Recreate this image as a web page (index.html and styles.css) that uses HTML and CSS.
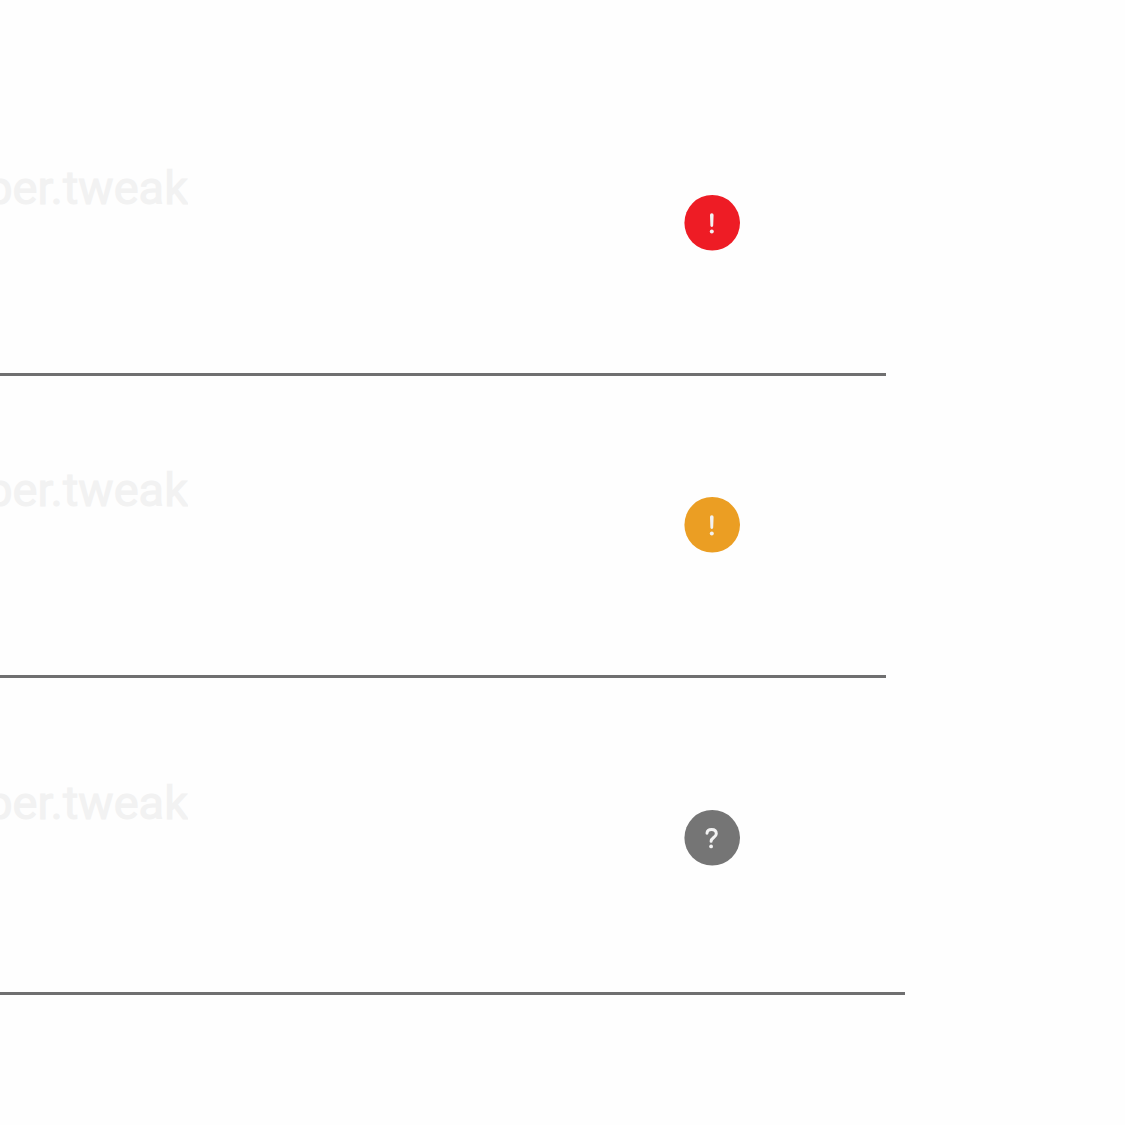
FILE: index.html
```html
<!DOCTYPE html>
<html lang="en">
<head>
<meta charset="utf-8">
<meta name="viewport" content="width=device-width, initial-scale=1">
<title>Tweaks</title>
<link rel="stylesheet" href="styles.css">
</head>
<body>
<ul class="list">
  <li class="row">
    <span class="name">per.tweak</span>
    <svg class="badge badge-error" viewBox="0 0 56 56" role="img" aria-label="Error">
      <circle class="disc" cx="28.2" cy="27.8" r="27.8"/>
      <path class="mark" d="M26 20a1.8 1.8 0 0 1 3.6 0l-.4 10.6a1.4 1.4 0 0 1-2.8 0z"/>
      <circle class="mark" cx="27.8" cy="36.4" r="2"/>
    </svg>
  </li>
  <li class="row">
    <span class="name">per.tweak</span>
    <svg class="badge badge-warning" viewBox="0 0 56 56" role="img" aria-label="Warning">
      <circle class="disc" cx="28.2" cy="27.8" r="27.8"/>
      <path class="mark" d="M26 20a1.8 1.8 0 0 1 3.6 0l-.4 10.6a1.4 1.4 0 0 1-2.8 0z"/>
      <circle class="mark" cx="27.8" cy="36.4" r="2"/>
    </svg>
  </li>
  <li class="row row-last">
    <span class="name">per.tweak</span>
    <svg class="badge badge-unknown" viewBox="0 0 56 56" role="img" aria-label="Unknown">
      <circle class="disc" cx="28.2" cy="27.8" r="27.8"/>
      <path class="hook" d="M23 23.2C23.2 20.9 25.1 19.6 27.6 19.6c2.9 0 4.7 1.5 4.7 4.1 0 3.7-5.2 4-5.2 7.6"/>
      <circle class="mark" cx="27.1" cy="36.4" r="1.9"/>
    </svg>
  </li>
</ul>
</body>
</html>
```
FILE: styles.css
```css
body {
  margin: 0;
  background: #fefefe;
  font-family: Roboto, "Liberation Sans", sans-serif;
}

.list {
  margin: 0;
  padding: 74px 0 0;
  list-style: none;
}

.row {
  display: flex;
  justify-content: space-between;
  align-items: flex-start;
  box-sizing: border-box;
  margin-right: 239px;
  padding: 85px 146px 122px 0;
  border-bottom: 3px solid #6f6f70;
}

.row-last {
  margin-right: 220px;
  padding: 96px 165px 126px 0;
}

.name {
  display: flex;
  justify-content: flex-end;
  width: 188px;
  overflow: hidden;
  color: #f2f2f2;
  font-size: 47px;
  font-weight: 400;
  line-height: 58px;
  -webkit-text-stroke: 1px #f2f2f2;
}

.badge {
  display: block;
  width: 56px;
  height: 56px;
  margin-top: 36px;
}

.badge-error .disc {
  fill: #ee1c25;
}

.badge-warning .disc {
  fill: #eb9e23;
}

.badge-unknown .disc {
  fill: #757575;
}

.mark {
  fill: #f2f2f2;
}

.hook {
  fill: none;
  stroke: #f2f2f2;
  stroke-width: 3;
  stroke-linecap: round;
}
```
